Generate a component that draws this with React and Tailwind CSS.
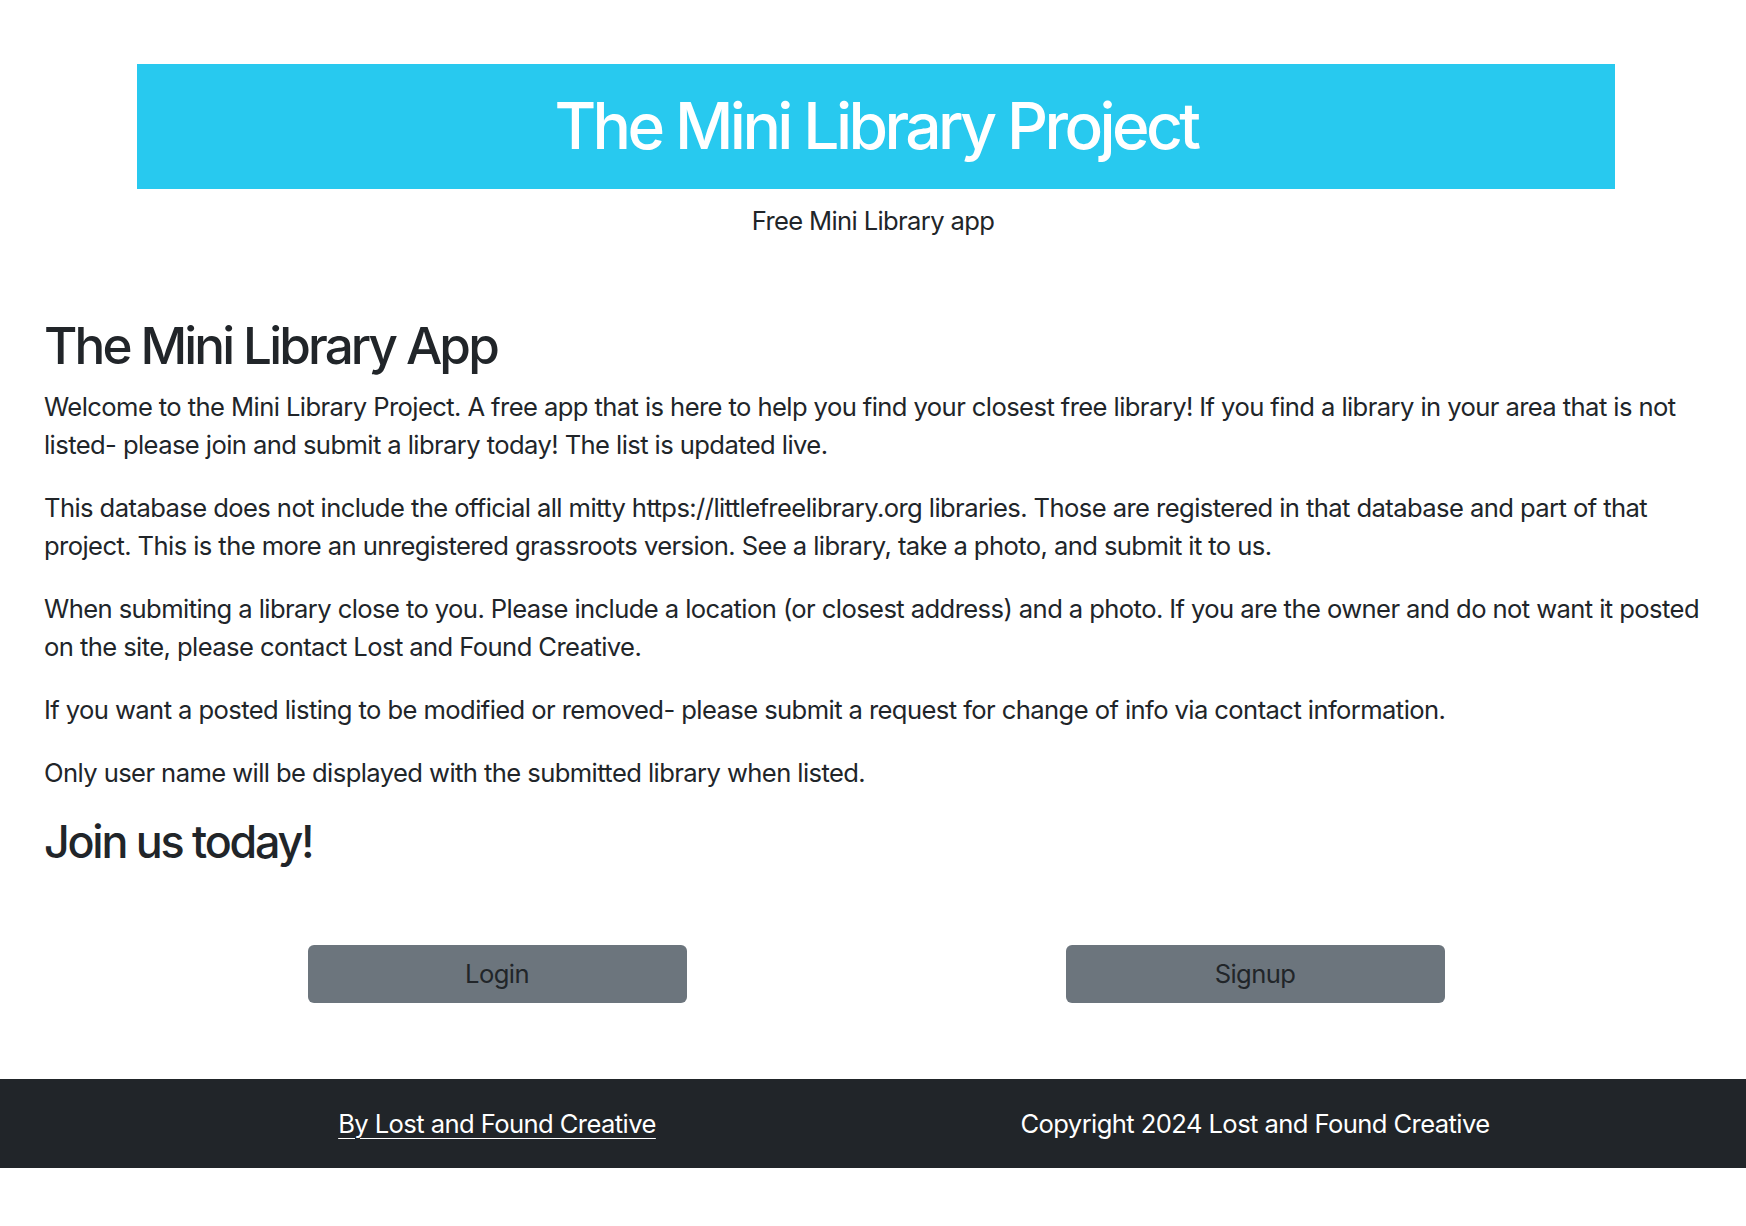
export default function App() {
  return (
    <div className="min-h-[1226px] bg-white text-[#212529] font-['Inter','Noto_Sans',sans-serif] text-[25.6px] leading-[38px] tracking-[-0.023em]">
      <header className="pt-[64px]">
        <div className="ml-[137px] w-[1478px] h-[125px] bg-[#28c9ef] flex items-center justify-center">
          <h1 className="text-white text-[64px] leading-[1.2] font-medium tracking-[-0.056em]">The Mini Library Project</h1>
        </div>
        <p className="text-center mt-[13px] tracking-[-0.025em]">Free Mini Library app</p>
      </header>

      <main className="pl-[44px] pr-[38px] pt-[75px]">
        <h2 className="text-[51.2px] leading-[1.2] font-medium mb-[12px] tracking-[-0.056em]">The Mini Library App</h2>
        <p className="mb-[25px]">
          Welcome to the Mini Library Project. A free app that is here to help you find your closest free library! If
          you find a library in your area that is not listed- please join and submit a library today! The list is
          updated live.
        </p>
        <p className="mb-[25px]">
          This database does not include the official all mitty https://littlefreelibrary.org libraries. Those are
          registered in that database and part of that project. This is the more an unregistered grassroots version.
          See a library, take a photo, and submit it to us.
        </p>
        <p className="mb-[25px]">
          When submiting a library close to you. Please include a location (or closest address) and a photo. If you
          are the owner and do not want it posted on the site, please contact Lost and Found Creative.
        </p>
        <p className="mb-[25px]">
          If you want a posted listing to be modified or removed- please submit a request for change of info via
          contact information.
        </p>
        <p className="mb-[24px]">Only user name will be displayed with the submitted library when listed.</p>
        <h3 className="text-[44.8px] leading-[1.2] font-medium tracking-[-0.05em]">Join us today!</h3>
      </main>

      <div className="ml-[118px] w-[1516px] grid grid-cols-2 pt-[75px] pb-[76px]">
        <div className="flex justify-center">
          <button className="w-[379px] h-[58px] rounded-[6px] bg-[#6c757d] text-[#212529]">Login</button>
        </div>
        <div className="flex justify-center">
          <button className="w-[379px] h-[58px] rounded-[6px] bg-[#6c757d] text-[#212529]">Signup</button>
        </div>
      </div>

      <footer className="bg-[#212529] text-white py-[25.5px]">
        <div className="ml-[118px] w-[1516px] grid grid-cols-2 text-center">
          <a href="#" className="underline underline-offset-[5px] decoration-1">By Lost and Found Creative</a>
          <p>Copyright 2024 Lost and Found Creative</p>
        </div>
      </footer>
    </div>
  );
}
